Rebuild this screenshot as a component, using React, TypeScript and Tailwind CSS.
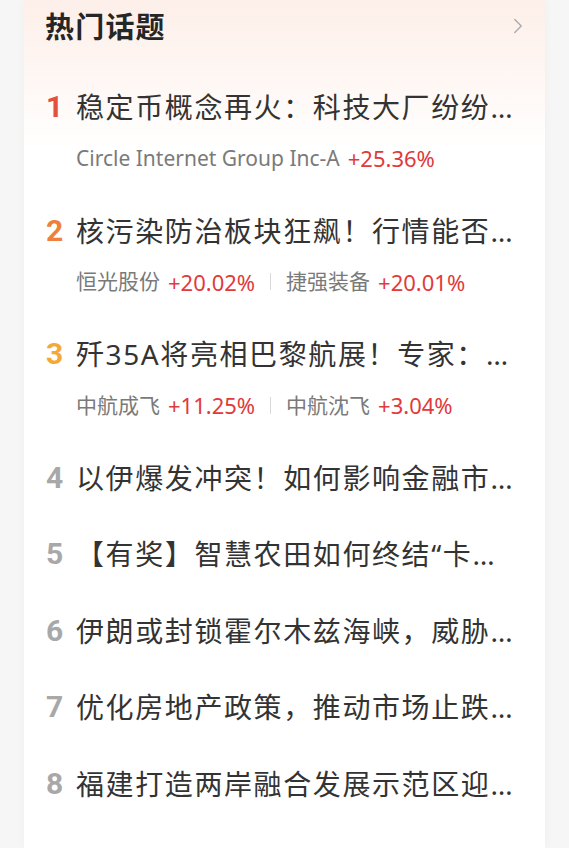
import React from "react";
import { ChevronRight } from "lucide-react";

type Stock = { name: string; pct: string };
type Topic = { title: string; stocks?: Stock[] };

const topics: Topic[] = [
  {
    title: "稳定币概念再火：科技大厂纷纷入局，布局支付新赛道",
    stocks: [{ name: "Circle Internet Group Inc-A", pct: "+25.36%" }],
  },
  {
    title: "核污染防治板块狂飙！行情能否持续？",
    stocks: [
      { name: "恒光股份", pct: "+20.02%" },
      { name: "捷强装备", pct: "+20.01%" },
    ],
  },
  {
    title: "歼35A将亮相巴黎航展！专家：有望出口",
    stocks: [
      { name: "中航成飞", pct: "+11.25%" },
      { name: "中航沈飞", pct: "+3.04%" },
    ],
  },
  { title: "以伊爆发冲突！如何影响金融市场走势？" },
  { title: "【有奖】智慧农田如何终结“卡脖子”难题？" },
  { title: "伊朗或封锁霍尔木兹海峡，威胁全球能源供应" },
  { title: "优化房地产政策，推动市场止跌回稳" },
  { title: "福建打造两岸融合发展示范区迎来新机遇" },
];

const numColors = [
  "text-[#e2503f]",
  "text-[#ef7f3c]",
  "text-[#f3a935]",
];

const font = { fontFamily: '"Noto Sans", "Noto Sans CJK SC", sans-serif' };

export default function App() {
  return (
    <div
      className="min-h-screen bg-[#f6f6f6] px-[24px]"
      style={font}
    >
      <div className="min-h-[848px] bg-[linear-gradient(180deg,#fdefe9_0px,#fef7f4_80px,#ffffff_150px)] shadow-[0_0_10px_rgba(0,0,0,0.035)]">
        <div className="flex h-[52px] items-center justify-between pl-[21px] pr-[14px]">
          <span className="text-[29px] font-bold leading-none tracking-[1.2px] text-[#262626]">
            热门话题
          </span>
          <ChevronRight size={26} strokeWidth={1.3} color="#ababab" />
        </div>
        <div className="flex flex-col gap-[36.5px] pl-[22px] pr-[25px] pt-[35px]">
          {topics.map((t, i) => (
            <div key={i} className="flex flex-col">
              <div className="flex h-[40px] items-center">
                <span
                  className={`w-[30px] shrink-0 text-[30px] font-bold leading-none ${
                    i < 3 ? numColors[i] : "text-[#a8a8a8]"
                  }`}
                  style={{ fontFamily: "Roboto, sans-serif" }}
                >
                  {i + 1}
                </span>
                <span className="min-w-0 flex-1 truncate text-[28px] leading-[40px] tracking-[1.6px] text-[#333333]">
                  {t.title}
                </span>
              </div>
              {t.stocks && (
                <div className="mt-[15px] flex h-[32px] items-center gap-[15px] pl-[30px] text-[21px] leading-none">
                  {t.stocks.map((s, j) => (
                    <React.Fragment key={j}>
                      {j > 0 && (
                        <span className="h-[17px] w-px bg-[#d9d9d9]" />
                      )}
                      <span className="flex items-center gap-[8px]">
                        <span className="text-[#7a7a7a]">{s.name}</span>
                        <span className="text-[22px] text-[#e03a3a]">{s.pct}</span>
                      </span>
                    </React.Fragment>
                  ))}
                </div>
              )}
            </div>
          ))}
        </div>
      </div>
    </div>
  );
}
